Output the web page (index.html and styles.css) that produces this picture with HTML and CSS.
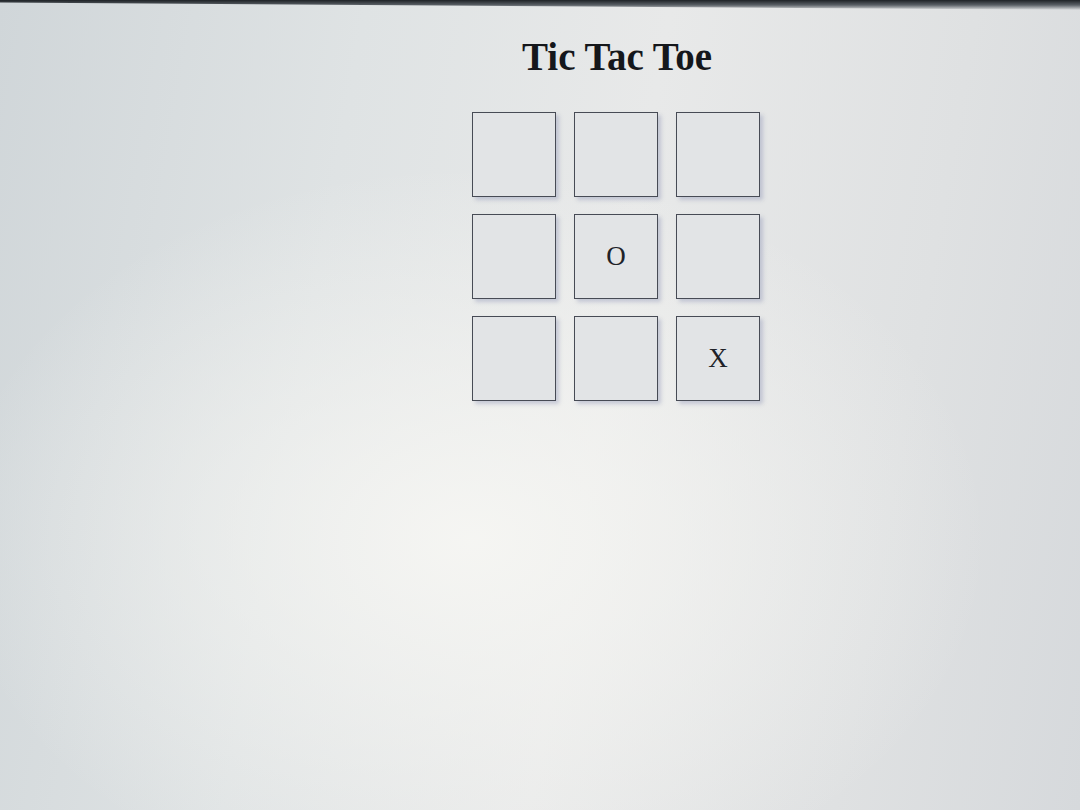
FILE: index.html
```html
<!DOCTYPE html>
<html>
<head>
<meta charset="utf-8">
<link rel="stylesheet" href="styles.css">
</head>
<body>
<div class="bezel"></div>
<div class="game">
  <h1 class="title">Tic Tac Toe</h1>
  <div class="board">
    <div class="cell"></div>
    <div class="cell"></div>
    <div class="cell"></div>
    <div class="cell"></div>
    <div class="cell">O</div>
    <div class="cell"></div>
    <div class="cell"></div>
    <div class="cell"></div>
    <div class="cell">X</div>
  </div>
</div>
</body>
</html>
```

FILE: styles.css
```css
html, body {
  margin: 0;
  padding: 0;
  width: 1080px;
  height: 810px;
  overflow: hidden;
}
body {
  font-family: "Liberation Serif", "Times New Roman", serif;
  color: #1a1c20;
  background:
    radial-gradient(ellipse 720px 520px at 470px 540px, rgba(246,246,243,0.95), rgba(246,246,243,0) 72%),
    linear-gradient(100deg, #d0d6d9 0%, #dfe3e4 30%, #e8e9e9 55%, #dfe1e2 80%, #d6d9dc 100%);
  position: relative;
}
.bezel {
  position: absolute;
  left: 0;
  top: 0;
  width: 1080px;
  height: 10px;
  background: linear-gradient(180deg, #1e2226 0%, #5a6066 50%, rgba(200,205,208,0) 100%);
  clip-path: polygon(0 0, 100% 0, 100% 100%, 0 25%);
}
.game {
  margin-left: 472px;
  width: 290px;
  padding-top: 37px;
}
.title {
  margin: 0;
  font-size: 39px;
  line-height: 40px;
  font-weight: bold;
  text-align: center;
  color: #15171b;
}
.board {
  margin-top: 35px;
  display: grid;
  grid-template-columns: repeat(3, 84px);
  grid-auto-rows: 85px;
  gap: 17px 18px;
}
.cell {
  box-sizing: border-box;
  border: 1.5px solid #474b55;
  background: #e2e4e6;
  box-shadow: 3px 3px 4px rgba(120,130,170,0.35);
  display: flex;
  align-items: center;
  justify-content: center;
  font-size: 27px;
  color: #202228;
}
```
